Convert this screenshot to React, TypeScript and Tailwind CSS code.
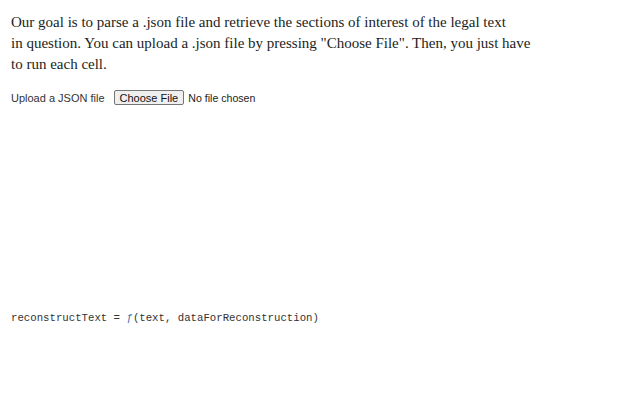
export default function App() {
  return (
    <div className="w-[640px] h-[400px] bg-white overflow-hidden px-[11px] pt-[12px]">
      {/* Intro paragraph */}
      <p className="text-[15px] leading-[21px] text-[#1b1e23] font-['Liberation_Serif',serif]">
        Our goal is to parse a .json file and retrieve the sections of interest of the legal text
        <br />
        in question. You can upload a .json file by pressing "Choose File". Then, you just have
        <br />
        to run each cell.
      </p>

      {/* File upload */}
      <form className="mt-[15px] flex items-center gap-[9px] text-[11px] leading-[15px] text-[#333] font-['Liberation_Sans',sans-serif]">
        <label htmlFor="json-upload">Upload a JSON file</label>
        <input
          id="json-upload"
          type="file"
          accept=".json"
          className="text-[10.6px] leading-[15px] text-[#222] file:mr-[4px] file:h-[15px] file:border file:border-[#767676] file:bg-[#efefef] file:rounded-[2px] file:px-[5px] file:py-0 file:text-[11px] file:text-[#111] file:font-['Liberation_Sans',sans-serif]"
        />
      </form>

      {/* Cell output */}
      <div className="mt-[204px] text-[10.7px] text-[#333] font-['Liberation_Mono',monospace]">
        reconstructText = <span className="text-[#3b6fa8]">ƒ</span>(text, dataForReconstruction)
      </div>
    </div>
  );
}
